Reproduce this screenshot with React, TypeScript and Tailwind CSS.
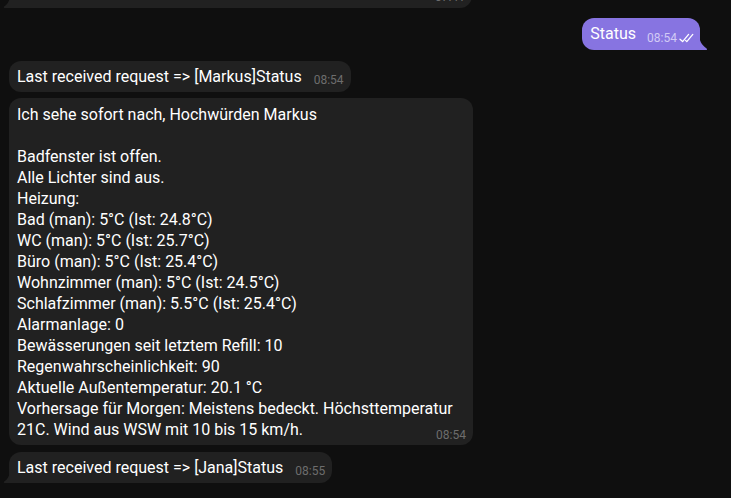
const font = { fontFamily: "Roboto, 'Liberation Sans', sans-serif" };

function InTail() {
  return (
    <svg width="7" height="14" viewBox="0 0 7 14" className="absolute bottom-0 -left-[6px]">
      <path d="M7 0 C7 6 5 10 1.2 12.6 C0.4 13.2 0.8 14 1.6 14 H7 Z" fill="#212121" />
    </svg>
  );
}

function OutTail() {
  return (
    <svg width="9" height="16" viewBox="0 0 9 16" className="absolute bottom-0 -right-[8px]">
      <path d="M0 0 C0 6 2.5 11 7.6 14.4 C8.4 15 8 16 7.2 16 H0 Z" fill="#8774e1" />
    </svg>
  );
}

function Checks() {
  return (
    <svg width="17" height="10" viewBox="0 0 17 10" className="inline-block ml-[2px]">
      <path d="M1 6.2 L3.6 8.6 L9.6 1.4" fill="none" stroke="#ffffff" strokeWidth="1.3" strokeLinecap="round" strokeLinejoin="round" />
      <path d="M6.6 7.4 L7.8 8.6 L13.8 1.4" fill="none" stroke="#ffffff" strokeWidth="1.3" strokeLinecap="round" strokeLinejoin="round" />
    </svg>
  );
}

function Incoming({ text, time, tail }: { text: string; time: string; tail?: boolean }) {
  return (
    <div
      className={`relative w-fit bg-[#212121] rounded-[12px] pl-[8px] pr-[7px] pt-[5px] pb-[5px] text-[16px] leading-[21px] text-white flow-root ${
        tail ? "rounded-bl-none" : ""
      }`}
    >
      <span>{text}</span>
      <span className="float-right ml-[12px] mt-[8px] text-[12px] leading-[12px] text-[#6d6d6d]">{time}</span>
      {tail && <InTail />}
    </div>
  );
}

const report = `Ich sehe sofort nach, Hochwürden Markus

Badfenster ist offen.
Alle Lichter sind aus.
Heizung:
Bad (man): 5°C (Ist: 24.8°C)
WC (man): 5°C (Ist: 25.7°C)
Büro (man): 5°C (Ist: 25.4°C)
Wohnzimmer (man): 5°C (Ist: 24.5°C)
Schlafzimmer (man): 5.5°C (Ist: 25.4°C)
Alarmanlage: 0
Bewässerungen seit letztem Refill: 10
Regenwahrscheinlichkeit: 90
Aktuelle Außentemperatur: 20.1 °C
Vorhersage für Morgen: Meistens bedeckt. Höchsttemperatur
21C. Wind aus WSW mit 10 bis 15 km/h.`;

export default function App() {
  return (
    <div className="w-[731px] h-[498px] bg-[#0f0f0f] overflow-hidden" style={font}>
      <div className="flex flex-col pl-[9px]">
        <div className="relative w-[463px] h-[40px] -mt-[32px] bg-[#212121] rounded-[12px] rounded-bl-none flex items-end justify-end pr-[7px] pb-[5px]">
          <span className="text-[12px] leading-[12px] text-[#6d6d6d]">07:41</span>
          <InTail />
        </div>

        <div className="mt-[10px] self-end mr-[31px] relative bg-[#8774e1] rounded-[12px] rounded-br-none pl-[8px] pr-[4px] pt-[5px] pb-[6px] text-[16px] leading-[21px] text-white flow-root">
          <span>Status</span>
          <span className="float-right ml-[11px] mt-[9px] text-[12px] leading-[12px] text-[#d2caf5] flex items-center">
            08:54
            <Checks />
          </span>
          <OutTail />
        </div>

        <div className="mt-[11px]">
          <Incoming text="Last received request => [Markus]Status" time="08:54" />
        </div>

        <div className="mt-[6px] w-[464px] bg-[#212121] rounded-[12px] pl-[8px] pr-[7px] pt-[6px] pb-[4px] text-[16px] leading-[21px] text-white flow-root">
          <span className="whitespace-pre-line">{report}</span>
          <span className="float-right ml-[12px] mt-[10px] text-[12px] leading-[12px] text-[#6d6d6d]">08:54</span>
        </div>

        <div className="mt-[7px]">
          <Incoming text="Last received request => [Jana]Status" time="08:55" tail />
        </div>
      </div>
    </div>
  );
}
